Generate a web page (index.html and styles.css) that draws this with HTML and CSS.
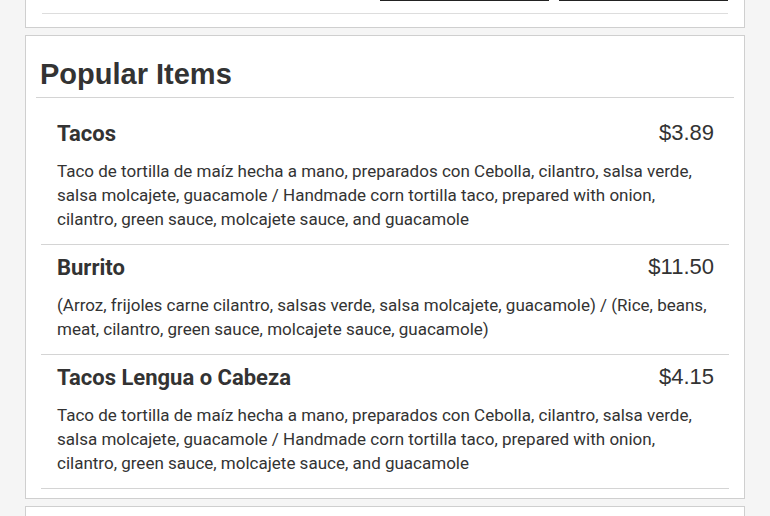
FILE: index.html
```html
<!DOCTYPE html>
<html lang="en">
<head>
    <meta charset="UTF-8">
    <meta name="viewport" content="width=device-width, initial-scale=1.0">
    <title>Popular Items</title>
    <link rel="stylesheet" href="styles.css">
</head>
<body>
    <div class="page">

        <div class="card card-top">
            <div class="actions">
                <a class="btn" href="#" aria-label="Order Pickup"></a>
                <a class="btn" href="#" aria-label="Order Delivery"></a>
            </div>
            <div class="rule"></div>
        </div>

        <div class="card">
            <h2 class="section-title">Popular Items</h2>
            <ul class="menu">
                <li class="item">
                    <div class="item-head">
                        <h3>Tacos</h3>
                        <span class="price">$3.89</span>
                    </div>
                    <p>Taco de tortilla de maíz hecha a mano, preparados con Cebolla, cilantro, salsa verde, salsa molcajete, guacamole / Handmade corn tortilla taco, prepared with onion, cilantro, green sauce, molcajete sauce, and guacamole</p>
                </li>
                <li class="item">
                    <div class="item-head">
                        <h3>Burrito</h3>
                        <span class="price">$11.50</span>
                    </div>
                    <p>(Arroz, frijoles carne cilantro, salsas verde, salsa molcajete, guacamole) / (Rice, beans, meat, cilantro, green sauce, molcajete sauce, guacamole)</p>
                </li>
                <li class="item">
                    <div class="item-head">
                        <h3>Tacos Lengua o Cabeza</h3>
                        <span class="price">$4.15</span>
                    </div>
                    <p>Taco de tortilla de maíz hecha a mano, preparados con Cebolla, cilantro, salsa verde, salsa molcajete, guacamole / Handmade corn tortilla taco, prepared with onion, cilantro, green sauce, molcajete sauce, and guacamole</p>
                </li>
            </ul>
        </div>

        <div class="card card-next"></div>

    </div>
</body>
</html>
```

FILE: styles.css
```css
* {
    margin: 0px;
    padding: 0px;
    box-sizing: border-box;
}

html, body {
    background-color: #f5f5f5;
    color: #333;
    font-family: Roboto, 'Liberation Sans', Arial, sans-serif;
}

.page {
    width: 720px;
    margin: 0 auto;
}

.card {
    background: #fff;
    border: 1px solid #cfcfcf;
    padding: 10px 10px 9px;
    margin-top: 7px;
}

/* the card above, scrolled mostly out of view */
.card-top {
    margin-top: -46px;
    padding: 10px 16px 13px;
}

.actions {
    display: flex;
    justify-content: flex-end;
    gap: 10px;
}

.btn {
    display: block;
    width: 169px;
    height: 36px;
    border: 1px solid #222;
}

.rule {
    margin-top: 12px;
    border-top: 1px solid #ddd;
}

.section-title {
    margin-top: 12px;
    padding: 0 4px 6px;
    border-bottom: 1px solid #d4d4d4;
    font-family: 'Liberation Sans', Arial, sans-serif;
    font-size: 29px;
    font-weight: bold;
    color: #333;
}

.menu {
    list-style: none;
    margin: 13px 5px 0;
}

.item {
    padding: 9px 16px 13px;
    border-bottom: 1px solid #d4d4d4;
}

.item-head {
    display: flex;
    justify-content: space-between;
    align-items: center;
    height: 26px;
    margin-bottom: 13px;
}

.item-head h3 {
    font-size: 22px;
    font-weight: 700;
}

.price {
    font-family: 'Liberation Sans', Arial, sans-serif;
    font-size: 22px;
    margin-right: -1px;
}

.item p {
    font-size: 17px;
    line-height: 24px;
}

.card-next {
    height: 60px;
}
```
